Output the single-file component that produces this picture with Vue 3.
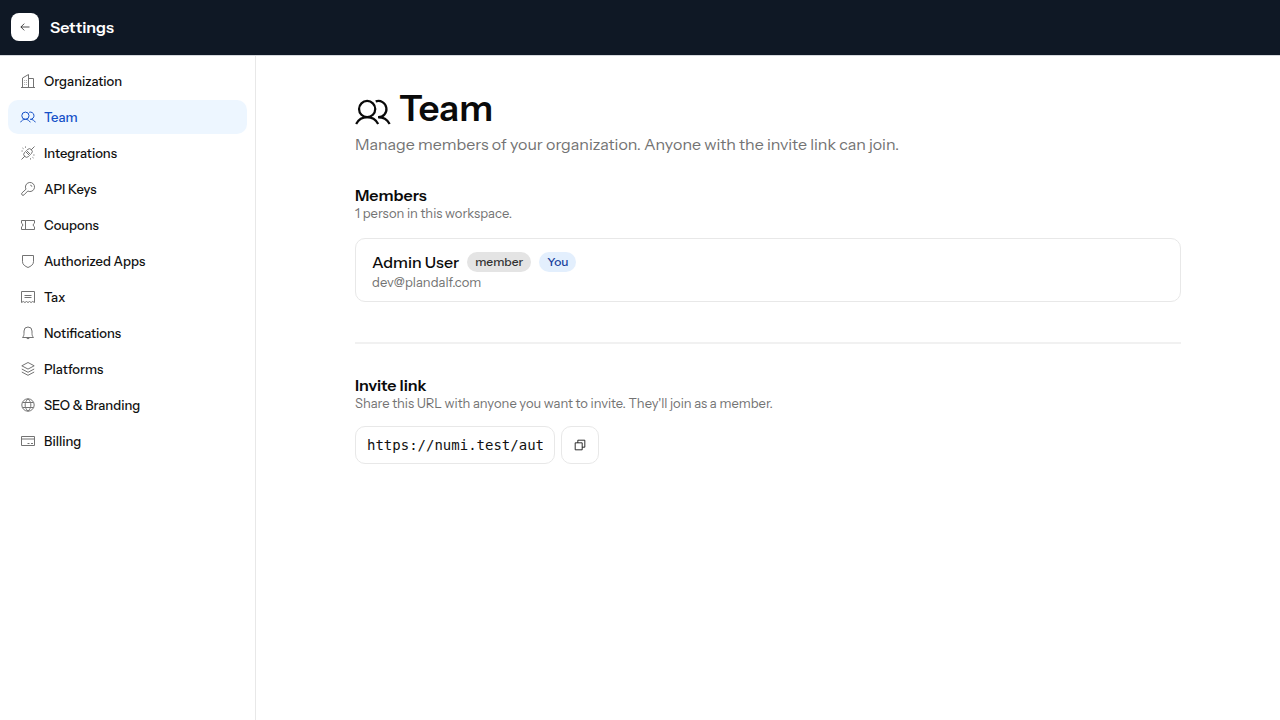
<script setup>
import { ref } from 'vue'

const items = [
  { label: 'Organization', paths: ['M1 14.5h14', 'M2.5 14.5V5l6-3.5v13', 'M8.5 5.5h5v9', 'M4.5 7.5h.6M6.3 7.5h.6M4.5 9.5h.6M6.3 9.5h.6M4.5 11.5h.6M6.3 11.5h.6'] },
  { label: 'Team', active: true, paths: ['M5.4 10.3a3.6 3.6 0 1 0 0-7.2 3.6 3.6 0 0 0 0 7.2z', 'M.5 13.3c1-1.8 2.8-3 4.9-3s3.9 1.2 4.9 3', 'M9.2 3.3a3.6 3.6 0 1 1 1.1 7', 'M10.3 10.3c2.2 0 4.1 1.2 5.1 3'] },
  { label: 'Integrations', paths: ['M1.5 14.5L5 11', 'M11 5l3.5-3.5', 'M5.5 6.5l4 4-.9.9a2.8 2.8 0 0 1-4-4z', 'M6.5 5.5l4 4 .9-.9a2.8 2.8 0 0 0-4-4z', 'M2.5 3l1 .7M5.5 1.5v1.2M1.5 6h1.2M13.5 13l-1-.7M10.5 14.5v-1.2M14.5 10h-1.2'] },
  { label: 'API Keys', paths: ['M6 8.2a4.56 4.56 0 1 1 1.8 1.8L4 13.9a1.4 1.4 0 0 1-2 0 1.4 1.4 0 0 1 0-2z', 'M10.3 4.2a1.5 1.5 0 0 1 1.5 1.5'] },
  { label: 'Coupons', paths: ['M1.5 3.5h13v2.7a1.9 1.9 0 0 0 0 3.6v2.7h-13V9.8a1.9 1.9 0 0 0 0-3.6z', 'M5.5 3.5v9'] },
  { label: 'Authorized Apps', paths: ['M2.5 2.5h11v6.2c0 3-2.7 4.6-5.5 5.8-2.8-1.2-5.5-2.8-5.5-5.8z'] },
  { label: 'Tax', paths: ['M1.5 2.5h13v11l-1.8-1-1.6 1-1.6-1-1.5 1-1.5-1-1.6 1-1.6-1-1.8 1z', 'M4.5 6.5h7M4.5 8.5h7'] },
  { label: 'Notifications', paths: ['M2.5 12.5c1-1 1.5-2.3 1.5-4V6a4 4 0 0 1 8 0v2.5c0 1.7.5 3 1.5 4z', 'M6.3 12.5a1.8 1.8 0 0 0 3.4 0'] },
  { label: 'Platforms', paths: ['M8 1.5l6.2 3.3L8 8.1 1.8 4.8z', 'M1.8 8L8 11.3 14.2 8', 'M1.8 11L8 14.3l6.2-3.3'] },
  { label: 'SEO & Branding', paths: ['M8 1.8a6.2 6.2 0 1 0 0 12.4A6.2 6.2 0 0 0 8 1.8z', 'M8 1.8c-3.8 3.4-3.8 9 0 12.4 3.8-3.4 3.8-9 0-12.4z', 'M2.5 5.5h11M2.5 10.5h11'] },
  { label: 'Billing', paths: ['M1.5 3.5h13v9h-13z', 'M1.5 6h13', 'M7.5 10.5h2M11 10.5h2'] }
]
const teamPaths = items[1].paths
const url = ref('https://numi.test/auth/register?invite=team')
</script>

<template>
  <div class="app">
    <header class="topbar">
      <button class="back" type="button" aria-label="Back">
        <svg viewBox="0 0 16 16"><path d="M14 8H2.500M7 3.500L2.500 8 7 12.500" /></svg>
      </button>
      <span class="title">Settings</span>
    </header>
    <div class="body">
      <nav class="sidebar" aria-label="Settings">
        <a v-for="item in items" :key="item.label" href="#" class="item" :class="{ active: item.active }">
          <svg viewBox="0 0 16 16"><path v-for="d in item.paths" :key="d" :d="d" /></svg>
          <span>{{ item.label }}</span>
        </a>
      </nav>
      <main class="main">
        <div class="content">
          <div class="heading">
            <svg viewBox="0 0 16 16"><path v-for="d in teamPaths" :key="d" :d="d" /></svg>
            <h1>Team</h1>
          </div>
          <p class="lead">Manage members of your organization. Anyone with the invite link can join.</p>
          <section class="members">
            <h2>Members</h2>
            <p class="hint">1 person in this workspace.</p>
            <div class="card">
              <div class="person">
                <span class="name">Admin User</span>
                <span class="badge">member</span>
                <span class="badge you">You</span>
              </div>
              <p class="email">dev@plandalf.com</p>
            </div>
          </section>
          <section class="invite">
            <h2>Invite link</h2>
            <p class="hint">Share this URL with anyone you want to invite. They'll join as a member.</p>
            <div class="row">
              <input v-model="url" type="text" readonly aria-label="Invite link" />
              <button class="copy" type="button" aria-label="Copy invite link">
                <svg viewBox="0 0 16 16"><path d="M2.500 5.500h8v8h-8zM5.500 5.500v-3h8v8h-3" /></svg>
              </button>
            </div>
          </section>
        </div>
      </main>
    </div>
  </div>
</template>

<style>
body {
  margin: 0;
  background: #fff;
}
</style>

<style scoped>
.app {
  min-height: 100vh;
  display: flex;
  flex-direction: column;
  color: #0a0a0a;
  font-family: "Instrument Sans", Roboto, "Liberation Sans", sans-serif;
}
.app * {
  box-sizing: border-box;
}
svg {
  flex: none;
  fill: none;
  stroke: currentColor;
  stroke-width: 1;
}
.topbar {
  display: flex;
  align-items: center;
  gap: 11px;
  height: 56px;
  padding: 0 11px 1px;
  background: #0f1825;
  border-bottom: 1px solid #d5d8dd;
}
.back {
  display: grid;
  place-items: center;
  width: 28px;
  height: 28px;
  padding: 0;
  border: 0;
  border-radius: 8px;
  background: #fff;
  color: #111;
}
.back svg {
  width: 12px;
  height: 12px;
}
.title {
  color: #fff;
  font-size: 16px;
  font-weight: 600;
  line-height: 24px;
}
.body {
  flex: 1;
  display: flex;
}
.sidebar {
  flex: none;
  display: flex;
  flex-direction: column;
  gap: 2px;
  width: 256px;
  padding: 8px;
  border-right: 1px solid #e8e8e8;
}
.item {
  display: flex;
  align-items: center;
  gap: 8px;
  height: 34px;
  padding: 0 12px;
  border-radius: 10px;
  color: #111;
  font-size: 13px;
  font-weight: 500;
  line-height: 20px;
  text-decoration: none;
}
.item svg {
  width: 16px;
  height: 16px;
  color: #737373;
}
.item.active,
.item.active svg {
  color: #1450c8;
}
.item.active {
  background: #edf6ff;
}
.main {
  flex: 1;
  min-width: 0;
  padding: 31px 32px;
}
.content {
  max-width: 826px;
  margin: 0 auto;
}
h1,
h2,
p {
  margin: 0;
}
.heading {
  display: flex;
  align-items: flex-end;
  gap: 8px;
  padding-bottom: 2px;
}
.heading svg {
  width: 36px;
  height: 36px;
}
h1 {
  font-size: 36px;
  font-weight: 600;
  line-height: 43px;
}
.lead {
  color: #737373;
  font-size: 16px;
  line-height: 24px;
}
.members {
  padding: 31px 0 40px;
  border-bottom: 2px solid #f1f1f1;
}
h2 {
  font-size: 16px;
  font-weight: 600;
  line-height: 17px;
}
.hint,
.email {
  color: #737373;
  font-size: 13px;
  line-height: 18px;
}
.card {
  margin-top: 16px;
  padding: 12px 16px 10px;
  border: 1px solid #e8e8e8;
  border-radius: 10px;
}
.person {
  display: flex;
  align-items: center;
  gap: 8px;
}
.name {
  font-size: 16px;
  font-weight: 500;
  line-height: 22px;
}
.badge {
  padding: 0 8px;
  border-radius: 10px;
  background: #e4e4e4;
  color: #333;
  font-size: 12px;
  font-weight: 500;
  line-height: 20px;
}
.badge.you {
  background: #e3effd;
  color: #173e9c;
}
.invite {
  padding-top: 33px;
}
.row {
  display: flex;
  gap: 6px;
  margin-top: 14px;
}
input {
  width: 200px;
  height: 38px;
  padding: 0 11px;
  border: 1px solid #e8e8e8;
  border-radius: 10px;
  background: #fff;
  color: #111;
  font-family: "DejaVu Sans Mono", monospace;
  font-size: 14px;
}
.copy {
  display: grid;
  place-items: center;
  width: 38px;
  height: 38px;
  padding: 0;
  border: 1px solid #e8e8e8;
  border-radius: 10px;
  background: #fff;
  color: #111;
}
.copy svg {
  width: 14px;
  height: 14px;
}
</style>
